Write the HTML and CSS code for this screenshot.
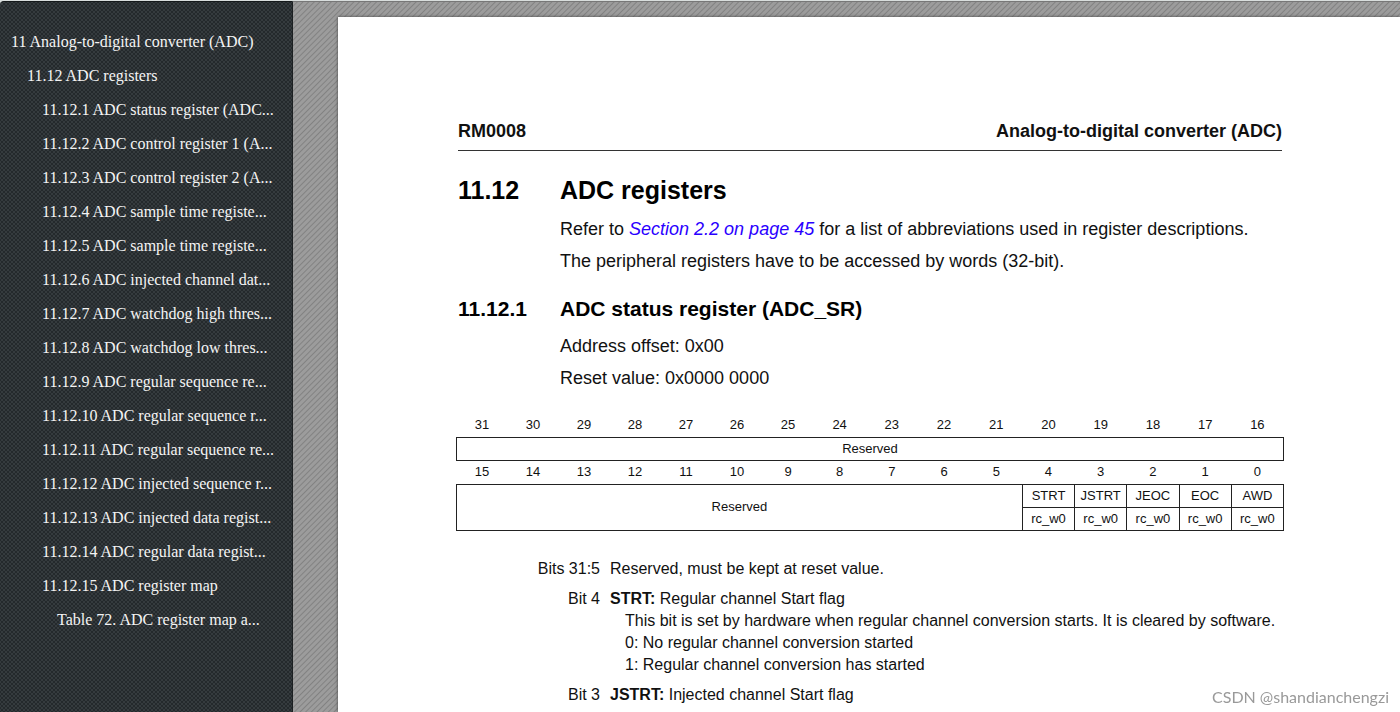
FILE: index.html
```html
<!DOCTYPE html>
<html lang="en">
<head>
  <meta charset="UTF-8" />
  <meta name="viewport" content="width=device-width, initial-scale=1.0" />
  <title>RM0008 - Analog-to-digital converter (ADC)</title>
  <link rel="stylesheet" href="styles.css">
</head>
<body>
  <div class="viewer">
    <nav class="sidebar">
      <ul class="outline">
        <li><a href="#adc">11 Analog-to-digital converter (ADC)</a></li>
        <li class="level-2"><a href="#registers">11.12 ADC registers</a></li>
        <li class="level-3"><a href="#status">11.12.1 ADC status register (ADC...</a></li>
        <li class="level-3"><a href="#r2">11.12.2 ADC control register 1 (A...</a></li>
        <li class="level-3"><a href="#r3">11.12.3 ADC control register 2 (A...</a></li>
        <li class="level-3"><a href="#r4">11.12.4 ADC sample time registe...</a></li>
        <li class="level-3"><a href="#r5">11.12.5 ADC sample time registe...</a></li>
        <li class="level-3"><a href="#r6">11.12.6 ADC injected channel dat...</a></li>
        <li class="level-3"><a href="#r7">11.12.7 ADC watchdog high thres...</a></li>
        <li class="level-3"><a href="#r8">11.12.8 ADC watchdog low thres...</a></li>
        <li class="level-3"><a href="#r9">11.12.9 ADC regular sequence re...</a></li>
        <li class="level-3"><a href="#r10">11.12.10 ADC regular sequence r...</a></li>
        <li class="level-3"><a href="#r11">11.12.11 ADC regular sequence re...</a></li>
        <li class="level-3"><a href="#r12">11.12.12 ADC injected sequence r...</a></li>
        <li class="level-3"><a href="#r13">11.12.13 ADC injected data regist...</a></li>
        <li class="level-3"><a href="#r14">11.12.14 ADC regular data regist...</a></li>
        <li class="level-3"><a href="#r15">11.12.15 ADC register map</a></li>
        <li class="level-4"><a href="#t72">Table 72. ADC register map a...</a></li>
      </ul>
    </nav>

    <main class="canvas">
      <article class="page" id="adc">
        <header class="page-header">
          <span>RM0008</span>
          <span>Analog-to-digital converter (ADC)</span>
        </header>

        <h1 id="registers"><span class="number">11.12</span>ADC registers</h1>
        <p>Refer to <a class="ref" href="#section-2-2">Section 2.2 on page 45</a> for a list of abbreviations used in register descriptions.</p>
        <p>The peripheral registers have to be accessed by words (32-bit).</p>

        <h2 id="status"><span class="number">11.12.1</span>ADC status register (ADC_SR)</h2>
        <p>Address offset: 0x00</p>
        <p>Reset value: 0x0000 0000</p>

        <table class="register">
          <colgroup>
            <col class="narrow" span="7">
            <col span="9">
          </colgroup>
          <tbody>
            <tr>
              <th>31</th><th>30</th><th>29</th><th>28</th><th>27</th><th>26</th><th>25</th><th>24</th>
              <th>23</th><th>22</th><th>21</th><th>20</th><th>19</th><th>18</th><th>17</th><th>16</th>
            </tr>
            <tr><td colspan="16">Reserved</td></tr>
            <tr>
              <th>15</th><th>14</th><th>13</th><th>12</th><th>11</th><th>10</th><th>9</th><th>8</th>
              <th>7</th><th>6</th><th>5</th><th>4</th><th>3</th><th>2</th><th>1</th><th>0</th>
            </tr>
            <tr>
              <td colspan="11" rowspan="2">Reserved</td>
              <td>STRT</td><td>JSTRT</td><td>JEOC</td><td>EOC</td><td>AWD</td>
            </tr>
            <tr><td>rc_w0</td><td>rc_w0</td><td>rc_w0</td><td>rc_w0</td><td>rc_w0</td></tr>
          </tbody>
        </table>

        <dl class="bits">
          <dt>Bits 31:5</dt>
          <dd>Reserved, must be kept at reset value.</dd>
          <dt>Bit 4</dt>
          <dd>
            <b>STRT:</b> Regular channel Start flag
            <div class="detail">
              This bit is set by hardware when regular channel conversion starts. It is cleared by software.<br>
              0: No regular channel conversion started<br>
              1: Regular channel conversion has started
            </div>
          </dd>
          <dt>Bit 3</dt>
          <dd><b>JSTRT:</b> Injected channel Start flag</dd>
        </dl>
      </article>
    </main>
  </div>
  <div class="watermark">CSDN @shandianchengzi</div>
</body>
</html>
```
FILE: styles.css
```css
* {
  box-sizing: border-box;
}
body {
  margin: 0;
  background-color: #d9dedd;
  color: #111;
  font-family: "Liberation Sans", Arial, sans-serif;
}
.viewer {
  display: flex;
  height: 100vh;
  padding-top: 1px;
  overflow: hidden;
}

/* outline */
.sidebar {
  flex: none;
  width: 293px;
  padding: 23px 12px 0 11px;
  border-top: 1px solid #15191b;
  border-right: 1px solid #1c2022;
  border-top-left-radius: 4px;
  background-color: #24292c;
  background-image:
    radial-gradient(#353b3e 1px, transparent 1px),
    radial-gradient(#353b3e 1px, transparent 1px);
  background-size: 4px 4px;
  background-position: 0 0, 2px 2px;
}
.outline {
  margin: 0;
  padding: 0;
  list-style: none;
}
.outline li {
  height: 34px;
  line-height: 34px;
  font-family: Georgia, "Liberation Serif", serif;
  font-size: 16px;
  white-space: nowrap;
}
.outline a {
  color: #f4f4f4;
  text-decoration: none;
}
.level-2 {
  padding-left: 16px;
}
.level-3 {
  padding-left: 31px;
}
.level-4 {
  padding-left: 46px;
}

/* page area */
.canvas {
  flex: 1;
  min-width: 0;
  padding: 15px 0 0 45px;
  border-top: 1px solid #777;
  background: repeating-linear-gradient(135deg, #9c9c9c 0, #9c9c9c 2px, #828282 3px, #9c9c9c 4px);
}
.page {
  min-height: 100%;
  padding: 102px 118px 0 120px;
  background-color: #fff;
  box-shadow: 0 0 3px #444;
}
.page-header {
  display: flex;
  justify-content: space-between;
  padding-bottom: 7px;
  border-bottom: 1px solid #333;
  font-size: 18px;
  font-weight: bold;
  line-height: 24px;
}
h1, h2 {
  display: flex;
  margin: 0;
  color: #000;
}
h1 {
  padding: 24px 0 8px;
  font-size: 25px;
  line-height: 30px;
}
h2 {
  padding: 18px 0 7px;
  font-size: 21px;
  line-height: 28px;
}
.number {
  flex: none;
  width: 102px;
}
p {
  margin: 0 0 0 102px;
  font-size: 18px;
  line-height: 32px;
}
.ref {
  color: #2a00ff;
  font-style: italic;
  text-decoration: none;
}

/* register map */
.register {
  width: calc(100% + 4px);
  margin: 19px -2px 0;
  border-collapse: collapse;
  table-layout: fixed;
  font-size: 13px;
  line-height: 16px;
}
.register .narrow {
  width: 51px;
}
.register th, .register td {
  height: 23px;
  padding: 0;
  text-align: center;
  font-weight: normal;
}
.register th {
  height: 24px;
}
.register td {
  border: 1px solid #222;
}

.bits {
  display: grid;
  grid-template-columns: 142px 1fr;
  gap: 8px 10px;
  margin: 27px 0 0;
  font-size: 16px;
  line-height: 22px;
}
.bits dt {
  text-align: right;
}
.bits dd {
  margin: 0;
}
.detail {
  padding-left: 15px;
  white-space: nowrap;
}

.watermark {
  position: fixed;
  right: 11px;
  bottom: 5px;
  color: #999;
  font-family: Lato, sans-serif;
  font-size: 16px;
  line-height: 20px;
}
```
